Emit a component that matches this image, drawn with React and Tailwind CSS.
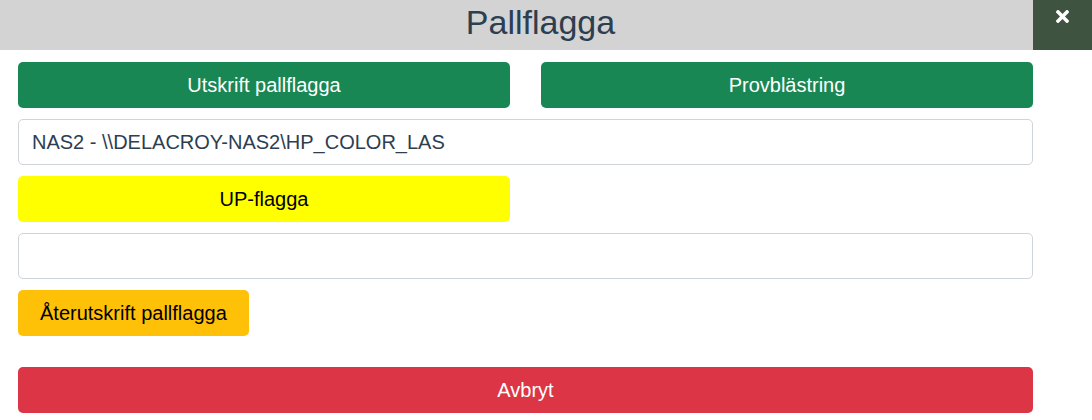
import { FaTimes } from 'react-icons/fa';

export default function App() {
  return (
    <div className="w-[1092px] h-[420px] bg-white font-['Liberation_Sans',Arial,sans-serif] text-[20px]">
      {/* Header */}
      <div className="flex h-[50px] bg-[#d3d3d3]">
        <div className="flex-1 pl-[48px] text-center text-[34px] leading-[44px] text-[#2c3e50]">
          Pallflagga
        </div>
        <div className="w-[59px] bg-[#3e5340] flex justify-center pt-[7px] text-white">
          <FaTimes size={19} />
        </div>
      </div>

      {/* Body */}
      <div className="w-[1015px] ml-[18px] mt-[12px] flex flex-col gap-[11px]">
        <div className="grid grid-cols-2 gap-[31px]">
          <button className="h-[46px] rounded-[5px] bg-[#198754] text-white">Utskrift pallflagga</button>
          <button className="h-[46px] rounded-[5px] bg-[#198754] text-white">Provblästring</button>
        </div>

        <div className="h-[46px] rounded-[5px] border border-[#ced4da] px-[13px] flex items-center text-[#2c3e50]">
          NAS2 - \\DELACROY-NAS2\HP_COLOR_LAS
        </div>

        <div className="grid grid-cols-2 gap-[31px]">
          <button className="h-[46px] rounded-[5px] bg-[#ffff00] text-black">UP-flagga</button>
        </div>

        <div className="h-[46px] rounded-[5px] border border-[#ced4da]" />

        <div>
          <button className="h-[46px] px-[22px] rounded-[5px] bg-[#ffc107] text-black">Återutskrift pallflagga</button>
        </div>

        <button className="mt-[20px] h-[46px] rounded-[5px] bg-[#dc3545] text-white">Avbryt</button>
      </div>
    </div>
  );
}
